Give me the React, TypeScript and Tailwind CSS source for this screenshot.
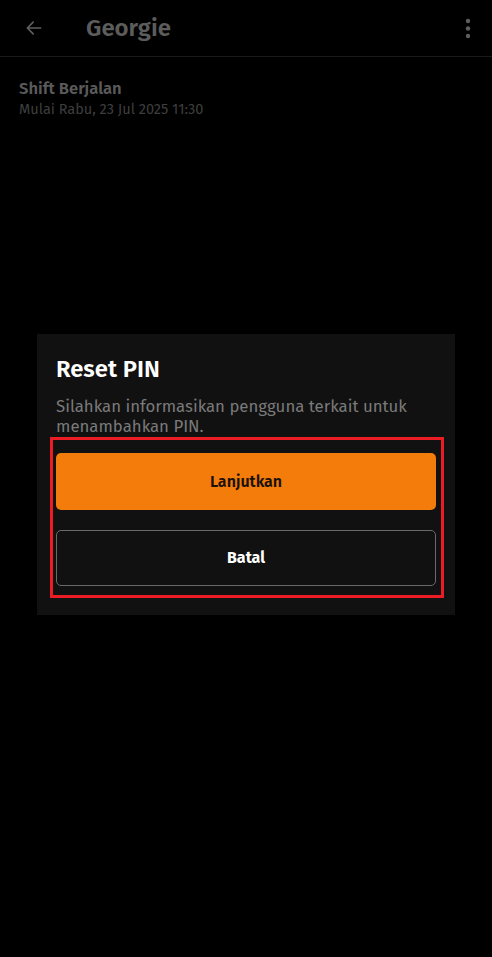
import React from "react";

export default function App() {
  const font = { fontFamily: '"Fira Sans", "Noto Sans", "Open Sans", sans-serif' };
  return (
    <div className="w-[492px] h-[957px] bg-black flex flex-col" style={font}>
      <div className="h-[57px] flex items-center border-b border-[#1a1a1a] px-[24px]">
        <svg width="20" height="20" viewBox="0 0 24 24" fill="none" stroke="#5e5e5e" strokeWidth="2" strokeLinecap="round" strokeLinejoin="round">
          <path d="M20 12H4M11 5l-7 7 7 7" />
        </svg>
        <div className="ml-[42px] text-[24px] font-semibold text-[#5c5c5c] leading-none">Georgie</div>
        <div className="flex-1" />
        <svg width="8" height="24" viewBox="0 0 8 24" fill="#5e5e5e" className="mr-[-4px]">
          <circle cx="4" cy="5" r="2.2" />
          <circle cx="4" cy="12.5" r="2.2" />
          <circle cx="4" cy="20" r="2.2" />
        </svg>
      </div>
      <div className="px-[19px] pt-[21px]">
        <div className="text-[16.6px] font-semibold text-[#5a5a5a] leading-[20px]">Shift Berjalan</div>
        <div className="text-[14.5px] text-[#3e3e3e] leading-[20px] mt-[1px]">Mulai Rabu, 23 Jul 2025 11:30</div>
      </div>
      <div className="flex justify-center mt-[215px]">
        <div className="w-[418px] bg-[#111111] px-[19px] pt-[21px] pb-[17px]">
          <div className="text-[23.8px] font-semibold text-white leading-[28px]">Reset PIN</div>
          <div className="text-[16.8px] text-[#7a7a7a] leading-[20px] mt-[13px]">
            Silahkan informasikan pengguna terkait untuk menambahkan PIN.
          </div>
          <div className="border-[3px] border-[#ec1c24] ml-[-6px] mr-[-8px] mt-[1px] pl-[3px] pr-[5px] pt-[13px] pb-[9px] flex flex-col gap-[20px]">
            <div className="h-[57px] rounded-[5px] bg-[#f47c0a] flex items-center justify-center text-[16px] font-semibold text-[#1a1108]">
              Lanjutkan
            </div>
            <div className="h-[56px] rounded-[5px] border-[1.5px] border-[#6a6a6a] flex items-center justify-center text-[16px] font-bold text-white">
              Batal
            </div>
          </div>
        </div>
      </div>
    </div>
  );
}
